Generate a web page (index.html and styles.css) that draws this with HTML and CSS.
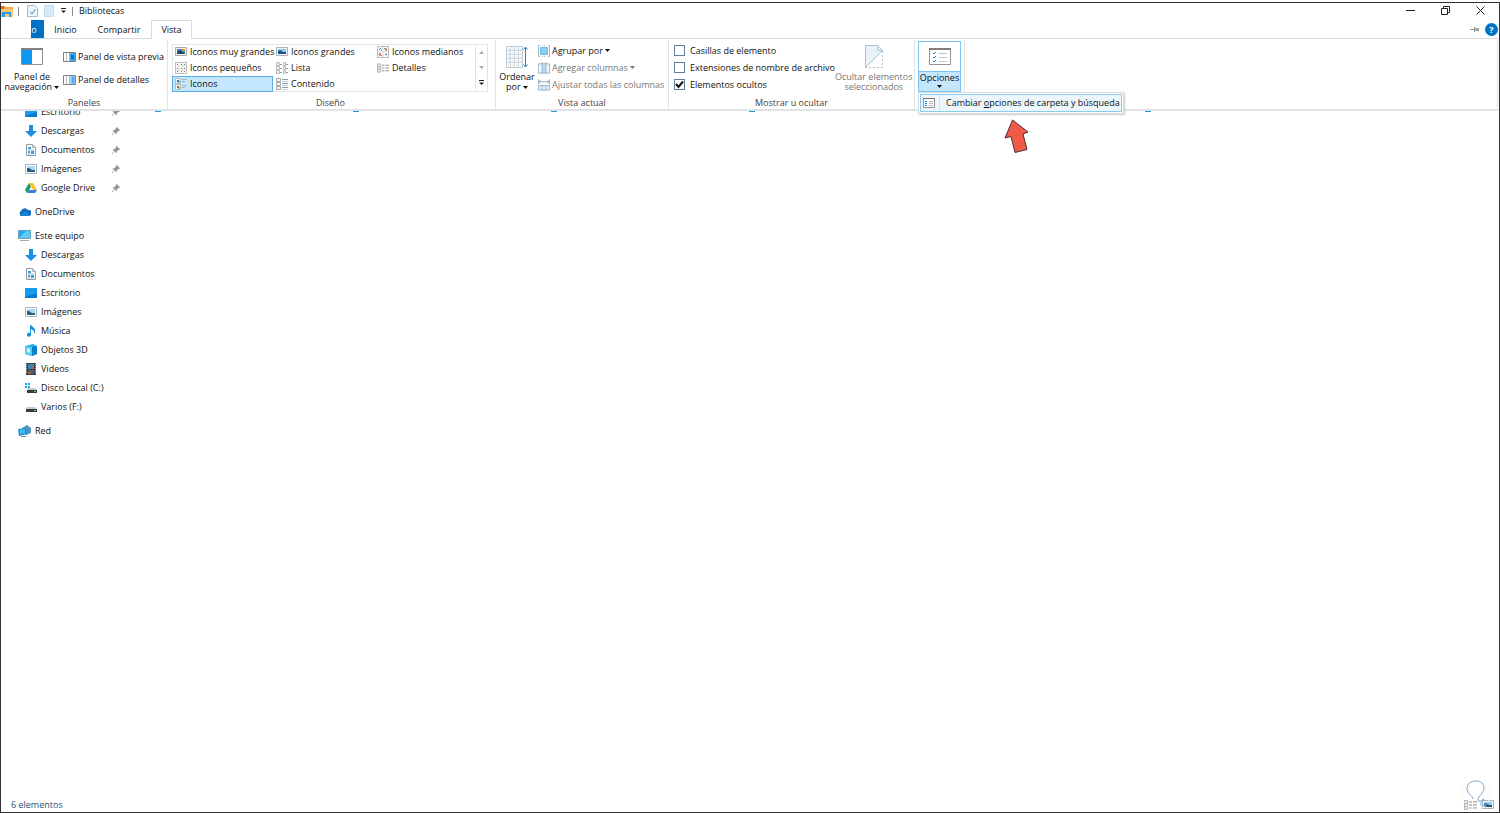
FILE: index.html
```
<!DOCTYPE html>
<html lang="es">
<head>
    <meta charset="UTF-8">
    <title>Bibliotecas</title>
    <link rel="stylesheet" href="styles.css">
</head>
<body>
    <!-- icons -->
    <svg class="sprite" aria-hidden="true">
        <symbol id="folder" viewBox="0 0 12 12">
            <path d="M0 1h4l1 1h7v10H0z" fill="#f5a742"/>
            <path d="M0 4h12v8H0z" fill="#fbc676"/>
            <path d="M0 1h3v3H0z" fill="#d9622b"/>
            <path d="M1 7h9v5H8V9H4v3H1z" fill="#2a9be0"/>
        </symbol>
        <symbol id="doc-check" viewBox="0 0 11 12">
            <path d="M.5.5h7l3 3v8H.5z" fill="#eef6fc" stroke="#9dbcd6"/>
            <path d="M3 6.5l2 2.5 3.5-5" fill="none" stroke="#3b8fd0"/>
        </symbol>
        <symbol id="doc-new" viewBox="0 0 11 12">
            <path d="M.5.5h9v11H.5z" fill="#d5e9f6" stroke="#c3dcec"/>
            <path d="M8 9l3 3M11 9l-3 3" stroke="#e8f2f9"/>
        </symbol>
        <symbol id="more" viewBox="0 0 7 6">
            <path d="M1 .5h5" stroke="#222"/>
            <path d="M1 2.5h5L3.500 5z" fill="#222"/>
        </symbol>
        <symbol id="down" viewBox="0 0 5 3"><path d="M0 0h5L2.500 3z" fill="currentColor"/></symbol>
        <symbol id="up" viewBox="0 0 5 3"><path d="M0 3h5L2.500 0z" fill="currentColor"/></symbol>
        <symbol id="nav-pane" viewBox="0 0 22 17">
            <path d="M.5.5h21v16H.5z" fill="#fff" stroke="#8d8d8d"/>
            <path d="M0 0h22v2H0z" fill="#8a7f7f"/>
            <path d="M1 2h9v14H1z" fill="#0f96f0"/>
            <path d="M10.500 2v14" stroke="#777"/>
        </symbol>
        <symbol id="preview-pane" viewBox="0 0 13 10">
            <path d="M.5.5h12v9H.5z" fill="#fff" stroke="#808080"/>
            <path d="M3.500 1v8M6.500 1v8" stroke="#bbb"/>
            <path d="M7 1h5v8H7z" fill="#3aa5ee"/>
            <path d="M8 3h3v4H8z" fill="#1272bd"/>
        </symbol>
        <symbol id="details-pane" viewBox="0 0 13 10">
            <path d="M.5.5h12v9H.5z" fill="#fff" stroke="#808080"/>
            <path d="M3.500 1v8M6.500 1v8" stroke="#bbb"/>
            <path d="M7 1h5v8H7z" fill="#8cccf5"/>
            <path d="M9 3h2M9 5h2M9 7h2" stroke="#1683d6"/>
        </symbol>
        <symbol id="pic-xl" viewBox="0 0 12 12">
            <path d="M.5 1.500h11v8H.5z" fill="#f4f4f4" stroke="#aaa"/>
            <path d="M2 3h8v5H2z" fill="#2f8fd0"/>
            <path d="M2 8V6l3-2 5 4z" fill="#22415c"/>
            <path d="M7 3h3v2H7z" fill="#e98a36"/>
        </symbol>
        <symbol id="pic-l" viewBox="0 0 12 12">
            <path d="M.5 1.500h11v8H.5z" fill="#f4f8fb" stroke="#aab4bc"/>
            <path d="M2 3h8v5H2z" fill="#8ccaf0"/>
            <path d="M2 8V5l2-1 3 2h3v2z" fill="#1c567f"/>
        </symbol>
        <symbol id="pic-m" viewBox="0 0 12 12">
            <path d="M.5.500h11v11H.5z" fill="#fafafa" stroke="#bbb"/>
            <path d="M6 1v10M1 6h10" stroke="#ddd"/>
            <path d="M2 4l2-2M8 9l2-1" stroke="#0078c8" fill="none"/>
            <path d="M8 3.500h2M2 8.500h2" stroke="#d5512a" stroke-width="2"/>
            <path d="M4 9.500h1M7 2.500h1M4 4.500h1" stroke="#2f9d7a"/>
        </symbol>
        <symbol id="pic-s" viewBox="0 0 12 12">
            <path d="M.5.500h11v11H.5z" fill="#fff" stroke="#bbb"/>
            <path d="M4 1v10M8 1v10M1 4h10M1 8h10" stroke="#ddd"/>
            <path d="M2 2.500h1M6 6.500h1M9 9.500h1" stroke="#c4632f"/>
            <path d="M6 2.500h1M9 6.500h1M2 9.500h1" stroke="#43729c"/>
            <path d="M9 2.500h1M2 6.500h1M6 9.500h1" stroke="#668a58"/>
        </symbol>
        <symbol id="tiles" viewBox="0 0 12 12">
            <path d="M.5.500h5v5h-5zM.5 6.500h5v5h-5z" fill="#f4f8fb" stroke="#b2bdc5"/>
            <path d="M2 3h2" stroke="#0078c8" stroke-width="2"/>
            <path d="M2 9h2" stroke="#c8552a" stroke-width="2"/>
            <path d="M3 4h2M3 10h2" stroke="#32966a"/>
            <path d="M7 1.500h5M7 3.500h3M7 7.500h5M7 9.500h3" stroke="#9cb3c5"/>
        </symbol>
        <symbol id="list" viewBox="0 0 12 12">
            <path d="M.5.500h3v3h-3zM.5 4.500h3v3h-3zM.5 8.500h3v3h-3zM7.500.500h2v3h-2zM7.500 4.500h2v3h-2zM7.500 8.500h2v3h-2z" fill="#f3f3f3" stroke="#bbb"/>
            <path d="M4 2.500h2M4 6.500h2M4 10.500h2M10 2.500h2M10 6.500h2M10 10.500h2" stroke="#999"/>
        </symbol>
        <symbol id="content" viewBox="0 0 12 12">
            <path d="M.5.500h4v3h-4zM.5 4.500h4v3h-4zM.5 8.500h4v3h-4z" fill="#f3f3f3" stroke="#aaa"/>
            <path d="M6 1.500h6M6 5.500h6M6 9.500h6" stroke="#7b9dba"/>
            <path d="M6 3.500h6M6 7.500h6M6 11.500h6" stroke="#c5cfd6"/>
        </symbol>
        <symbol id="details" viewBox="0 0 13 12">
            <path d="M.5 1.500h3v3h-3zM.5 4.500h3v3h-3zM.5 7.500h3v3h-3z" fill="#f3f3f3" stroke="#b0b0b0"/>
            <path d="M5 3h3M9 3h4M5 6h3M9 6h4M5 9h3M9 9h4" stroke="#8b8b8b"/>
        </symbol>
        <symbol id="sort" viewBox="0 0 22 22">
            <path d="M.5.500h16v21H.5z" fill="#fff" stroke="#b9c4cb"/>
            <path d="M0 4.500h17M0 8.500h17M0 12.500h17M0 16.500h17M4.500 0v22M8.500 0v22M12.500 0v22" stroke="#ced6db"/>
            <path d="M2 3h13M2 7h13M2 11h13M2 15h13M2 19h13" stroke="#cfe3f1" stroke-dasharray="2 2"/>
            <path d="M19.500 2v18M17.500 3.500l2-2.500 2 2.500M17.500 18.500l2 2.500 2-2.500" fill="none" stroke="#1c84cf"/>
        </symbol>
        <symbol id="group" viewBox="0 0 12 12">
            <path d="M2 .5H.5v11H2M10 .5h1.500v11H10" fill="none" stroke="#a5b6c3"/>
            <path d="M2.500 2.500h7v7h-7z" fill="#8ccff6" stroke="#6db8e6"/>
            <path d="M4 .5h4M4 11.500h4" stroke="#b6c4ce" stroke-dasharray="1 1"/>
        </symbol>
        <symbol id="add-col" viewBox="0 0 13 12">
            <path d="M.5 1.500h12v10H.5z" fill="#f3f8fc" stroke="#95b0c5"/>
            <path d="M4.500 0v12M8.500 0v12" stroke="#7199b9"/>
            <path d="M5 3h3v8H5z" fill="#b6d9ef"/>
        </symbol>
        <symbol id="fit-col" viewBox="0 0 13 12">
            <path d="M1 2.500h11M3 .5l-2 2 2 2M10 .5l2 2-2 2M.5 0v5M12.500 0v5" fill="none" stroke="#95a9b8"/>
            <path d="M.5 6.500h12v5H.5zM4.500 6v6M8.500 6v6" fill="#e5f1f9" stroke="#95b0c5"/>
        </symbol>
        <symbol id="hide-doc" viewBox="0 0 18 23">
            <path d="M.5 22.500V.5h12l5 5z" fill="#e8f3f9"/>
            <path d="M.5 22.500V.5h12l5 5L.5 22.500M12.500.5v5h5" fill="none" stroke="#a9c6d8"/>
            <path d="M17.500 6v16.500H1" fill="none" stroke="#b3c0c8" stroke-dasharray="2 2"/>
        </symbol>
        <symbol id="options" viewBox="0 0 22 17">
            <path d="M.5.5h21v16H.5z" fill="#fff" stroke="#949494"/>
            <path d="M0 0h22v2H0z" fill="#8a7b7b"/>
            <path d="M4 5l1 1 2-2M4 9l1 1 2-2M4 13l1 1 2-2" fill="none" stroke="#1789dc"/>
            <path d="M10 5.500h8M10 9.500h8M10 13.500h8" stroke="#c2c2c2"/>
        </symbol>
        <symbol id="options-small" viewBox="0 0 12 10">
            <path d="M.5.5h11v9H.5z" fill="#fff" stroke="#949494"/>
            <path d="M0 .5h12" stroke="#7d6d6d"/>
            <path d="M2 3.500h2M2 5.500h2M2 7.500h2" stroke="#1789dc"/>
            <path d="M6 3.500h4M6 5.500h4M6 7.500h4" stroke="#bbb"/>
        </symbol>
        <symbol id="desktop" viewBox="0 0 12 10"><path d="M0 0h12v10H0z" fill="#0b78cf"/><path d="M0 0h12v5L0 9z" fill="#159bef"/></symbol>
        <symbol id="download" viewBox="0 0 12 12"><path d="M4 0h4v6h4l-6 6-6-6h4z" fill="#1b8fe4"/></symbol>
        <symbol id="document" viewBox="0 0 12 12">
            <path d="M1.500.500h6l3 3v8h-9z" fill="#fff" stroke="#929ba1"/>
            <path d="M7.500.500v3h3" fill="none" stroke="#a7b0b6"/>
            <path d="M3 3h3v2H3zM3 7h2v2H3zM6 7h3v3H6z" fill="#3b9ed8"/>
            <path d="M3 6h6M3 10h3" stroke="#91b8cf"/>
        </symbol>
        <symbol id="picture" viewBox="0 0 12 10">
            <path d="M.5.500h11v9H.5z" fill="#fff" stroke="#aab4bc"/>
            <path d="M2 2h8v6H2z" fill="#a9daf5"/>
            <path d="M2 7V4l2 0 3 2h3v2H2z" fill="#28607f"/>
        </symbol>
        <symbol id="gdrive" viewBox="0 0 12 12">
            <path d="M4 1h4l4 7H8z" fill="#f9c22b"/>
            <path d="M4 1l2 4-4 6-2-3z" fill="#169b5b"/>
            <path d="M4 8h8l-2 3H2z" fill="#347fe0"/>
            <path d="M6 5l2 3H4z" fill="#fff"/>
        </symbol>
        <symbol id="cloud" viewBox="0 0 13 9"><path d="M3 9a3 3 0 0 1 0-5 4 4 0 0 1 7-1 3 3 0 0 1 1 6z" fill="#0f6dbf"/><path d="M2 8l6-4 4 4-1 1H3z" fill="#1783d6"/></symbol>
        <symbol id="pc" viewBox="0 0 13 12">
            <path d="M.5.500h12v8H.5z" fill="#24aaf3" stroke="#6b9cb9"/>
            <path d="M1 8l7-7h4v7z" fill="#5dcbfa"/>
            <path d="M2 10.500h9" stroke="#9aabb6"/>
        </symbol>
        <symbol id="music" viewBox="0 0 12 12"><path d="M5 0h1l4 4v4H9V6L6 4v6a2 2 0 1 1-1-2z" fill="#168fe2"/></symbol>
        <symbol id="cube" viewBox="0 0 12 12">
            <path d="M0 2l8-2 4 2v8l-5 2-7-2z" fill="#20aeea"/>
            <path d="M0 2l7 1v9l-7-2z" fill="#57cdf5"/>
            <path d="M7 3l5-1v8l-5 2z" fill="#087fc6"/>
            <path d="M2 4l3 1v4L2 8z" fill="#d7f3fc"/>
        </symbol>
        <symbol id="video" viewBox="0 0 12 12">
            <path d="M1 0h10v12H1z" fill="#3e4145"/>
            <path d="M3 1h6v5H3z" fill="#3b85b4"/>
            <path d="M3 7h6v4H3z" fill="#465f82"/>
            <path d="M6 4h3v2H6zM3 9h3v2H3z" fill="#b8593d"/>
            <path d="M1.500 1v10M10.500 1v10" stroke="#bbb" stroke-dasharray="1 1"/>
        </symbol>
        <symbol id="disk" viewBox="0 0 12 12">
            <path d="M2 6h8l2 3H1z" fill="#c8c8c8"/>
            <path d="M1 8h11v3H1z" fill="#383c40"/>
            <path d="M9 9.500h2" stroke="#54d978"/>
        </symbol>
        <symbol id="windisk" viewBox="0 0 12 12">
            <path d="M0 1h2v2H0zM3 1h2v2H3zM0 4h2v2H0zM3 4h2v2H3z" fill="#16a2e6"/>
            <path d="M3 6h7l2 3H2z" fill="#c8c8c8"/>
            <path d="M2 8h10v3H2z" fill="#383c40"/>
            <path d="M9 9.500h2" stroke="#54d978"/>
        </symbol>
        <symbol id="network" viewBox="0 0 13 12">
            <path d="M4 3l5-3 4 3v5l-5 2z" fill="#5794bc"/>
            <path d="M0 4l8-1 1 6-8 2z" fill="#138fdb"/>
            <path d="M1 5l6-1v4L2 9z" fill="#45baf2"/>
            <path d="M3 11.500h5" stroke="#5f91ad"/>
        </symbol>
        <symbol id="pin" viewBox="0 0 10 10">
            <path d="M6 0l4 4-1 1H8L6 7v2L5 8.500 3 6.500 1 5V4h2l2-2V1z" fill="#8b969f"/>
            <path d="M3 6.500L0 10" stroke="#8b969f"/>
        </symbol>
    </svg>

    <div class="window">
        <header class="title-bar">
            <svg class="app-icon" width="12" height="12"><use href="#folder"/></svg>
            <span class="bar"></span>
            <button class="quick" aria-label="Propiedades"><svg width="11" height="12"><use href="#doc-check"/></svg></button>
            <button class="quick" aria-label="Nueva carpeta"><svg width="11" height="12"><use href="#doc-new"/></svg></button>
            <button class="quick quick-more" aria-label="Personalizar"><svg width="7" height="6"><use href="#more"/></svg></button>
            <span class="bar"></span>
            <h1 class="title">Bibliotecas</h1>
            <div class="controls">
                <button aria-label="Minimizar"><svg width="9" height="9"><path d="M0 4.500h9" stroke="#222"/></svg></button>
                <button aria-label="Restaurar"><svg width="9" height="9"><path d="M.5 2.500h6v6h-6zM2.500 2V.5h6v6H7" fill="none" stroke="#222"/></svg></button>
                <button aria-label="Cerrar"><svg width="9" height="9"><path d="M.5.500l8 8M8.500.500l-8 8" stroke="#222"/></svg></button>
            </div>
        </header>

        <nav class="tabs">
            <button class="tab tab-file" aria-label="Archivo">o</button>
            <button class="tab tab-home">Inicio</button>
            <button class="tab tab-share">Compartir</button>
            <button class="tab tab-view active">Vista</button>
            <div class="tab-tools">
                <button aria-label="Anclar la cinta"><svg width="9" height="7"><path d="M0 3.500h4M8.500 2v3M4.500 1v5" stroke="#999" fill="none"/><path d="M5 2h3v3H5z" fill="#aaa"/></svg></button>
                <button class="help" aria-label="Ayuda">?</button>
            </div>
        </nav>

        <section class="ribbon">
            <div class="group group-panes">
                <div class="group-body">
                    <button class="big big-nav">
                        <svg width="22" height="17"><use href="#nav-pane"/></svg>
                        <span>Panel de<br>navegación <svg width="5" height="3"><use href="#down"/></svg></span>
                    </button>
                    <div class="stack stack-panes">
                        <button class="cmd"><svg width="13" height="10"><use href="#preview-pane"/></svg>Panel de vista previa</button>
                        <button class="cmd"><svg width="13" height="10"><use href="#details-pane"/></svg>Panel de detalles</button>
                    </div>
                </div>
                <div class="group-name">Paneles</div>
            </div>

            <div class="group group-layout">
                <div class="gallery">
                    <div class="views">
                        <button class="view"><svg width="12" height="12"><use href="#pic-xl"/></svg>Iconos muy grandes</button>
                        <button class="view"><svg width="12" height="12"><use href="#pic-l"/></svg>Iconos grandes</button>
                        <button class="view"><svg width="12" height="12"><use href="#pic-m"/></svg>Iconos medianos</button>
                        <button class="view"><svg width="12" height="12"><use href="#pic-s"/></svg>Iconos pequeños</button>
                        <button class="view"><svg width="12" height="12"><use href="#list"/></svg>Lista</button>
                        <button class="view"><svg width="12" height="12"><use href="#details"/></svg>Detalles</button>
                        <button class="view selected"><svg width="12" height="12"><use href="#tiles"/></svg>Iconos</button>
                        <button class="view"><svg width="12" height="12"><use href="#content"/></svg>Contenido</button>
                    </div>
                    <div class="gallery-scroll">
                        <button class="dim" aria-label="Subir"><svg width="5" height="3"><use href="#up"/></svg></button>
                        <button class="dim" aria-label="Bajar"><svg width="5" height="3"><use href="#down"/></svg></button>
                        <button aria-label="Más"><svg width="7" height="6"><use href="#more"/></svg></button>
                    </div>
                </div>
                <div class="group-name">Diseño</div>
            </div>

            <div class="group group-current">
                <div class="group-body">
                    <button class="big big-sort">
                        <svg width="22" height="22"><use href="#sort"/></svg>
                        <span>Ordenar<br>por <svg width="5" height="3"><use href="#down"/></svg></span>
                    </button>
                    <div class="stack">
                        <button class="cmd"><svg width="12" height="12"><use href="#group"/></svg>Agrupar por <svg width="5" height="3"><use href="#down"/></svg></button>
                        <button class="cmd" disabled><svg width="12" height="12"><use href="#add-col"/></svg>Agregar columnas <svg width="5" height="3"><use href="#down"/></svg></button>
                        <button class="cmd" disabled><svg width="12" height="12"><use href="#fit-col"/></svg>Ajustar todas las columnas</button>
                    </div>
                </div>
                <div class="group-name">Vista actual</div>
            </div>

            <div class="group group-show">
                <div class="group-body">
                    <div class="stack">
                        <label class="check"><input type="checkbox">Casillas de elemento</label>
                        <label class="check"><input type="checkbox">Extensiones de nombre de archivo</label>
                        <label class="check"><input type="checkbox" checked>Elementos ocultos</label>
                    </div>
                    <button class="big big-hide" disabled>
                        <svg width="18" height="23"><use href="#hide-doc"/></svg>
                        <span>Ocultar elementos<br>seleccionados</span>
                    </button>
                </div>
                <div class="group-name">Mostrar u ocultar</div>
            </div>

            <div class="group group-options">
                <button class="options">
                    <span class="options-icon"><svg width="22" height="17"><use href="#options"/></svg></span>
                    <span class="options-text">Opciones<svg width="5" height="3"><use href="#down"/></svg></span>
                </button>
                <div class="menu">
                    <button class="menu-item">
                        <svg width="12" height="10"><use href="#options-small"/></svg>
                        <span>Cambiar <u>o</u>pciones de carpeta y búsqueda</span>
                    </button>
                    <svg class="pointer" width="26" height="35">
                        <path d="M9.500 1L25 13l-5 2 4 15.500-12 3L8 17.500 2 19z" fill="#ee5a46" stroke="#4d3030"/>
                    </svg>
                </div>
            </div>
        </section>

        <main class="main">
            <nav class="tree">
                <ul>
                    <li class="child"><svg width="12" height="10"><use href="#desktop"/></svg><a href="#">Escritorio</a><svg class="pin" width="8" height="8"><use href="#pin"/></svg></li>
                    <li class="child"><svg width="12" height="12"><use href="#download"/></svg><a href="#">Descargas</a><svg class="pin" width="8" height="8"><use href="#pin"/></svg></li>
                    <li class="child"><svg width="12" height="12"><use href="#document"/></svg><a href="#">Documentos</a><svg class="pin" width="8" height="8"><use href="#pin"/></svg></li>
                    <li class="child"><svg width="12" height="10"><use href="#picture"/></svg><a href="#">Imágenes</a><svg class="pin" width="8" height="8"><use href="#pin"/></svg></li>
                    <li class="child"><svg width="12" height="12"><use href="#gdrive"/></svg><a href="#">Google Drive</a><svg class="pin" width="8" height="8"><use href="#pin"/></svg></li>
                </ul>
                <ul>
                    <li><svg width="13" height="9"><use href="#cloud"/></svg><a href="#">OneDrive</a></li>
                </ul>
                <ul>
                    <li><svg width="13" height="12"><use href="#pc"/></svg><a href="#">Este equipo</a></li>
                    <li class="child"><svg width="12" height="12"><use href="#download"/></svg><a href="#">Descargas</a></li>
                    <li class="child"><svg width="12" height="12"><use href="#document"/></svg><a href="#">Documentos</a></li>
                    <li class="child"><svg width="12" height="10"><use href="#desktop"/></svg><a href="#">Escritorio</a></li>
                    <li class="child"><svg width="12" height="10"><use href="#picture"/></svg><a href="#">Imágenes</a></li>
                    <li class="child"><svg width="12" height="12"><use href="#music"/></svg><a href="#">Música</a></li>
                    <li class="child"><svg width="12" height="12"><use href="#cube"/></svg><a href="#">Objetos 3D</a></li>
                    <li class="child"><svg width="12" height="12"><use href="#video"/></svg><a href="#">Videos</a></li>
                    <li class="child"><svg width="12" height="12"><use href="#windisk"/></svg><a href="#">Disco Local (C:)</a></li>
                    <li class="child"><svg width="12" height="12"><use href="#disk"/></svg><a href="#">Varios (F:)</a></li>
                </ul>
                <ul>
                    <li><svg width="13" height="12"><use href="#network"/></svg><a href="#">Red</a></li>
                </ul>
            </nav>
            <!-- only the lower edge of each library icon shows under the ribbon -->
            <div class="files">
                <span class="file"></span>
                <span class="file"></span>
                <span class="file"></span>
                <span class="file"></span>
                <span class="file"></span>
                <span class="file"></span>
            </div>
        </main>

        <footer class="status">
            <span>6 elementos</span>
            <div class="status-views">
                <button aria-label="Detalles"><svg width="13" height="12"><use href="#details"/></svg></button>
                <button aria-label="Iconos grandes"><svg width="12" height="12"><use href="#pic-l"/></svg></button>
                <svg class="bulb" width="30" height="32">
                    <circle cx="15" cy="16" r="14" fill="none" stroke="#eee" stroke-dasharray="3 2"/>
                    <path d="M12 20c0-3-6-5-6-10 0-5 4-8 9-8s8 3 8 7c0 5-6 8-6 12 0 3 4 0 6-1-2 3-5 5-3 6 1 1 4-1 5 2" fill="none" stroke="#78a8d0"/>
                </svg>
            </div>
        </footer>
    </div>
</body>
</html>
```
FILE: styles.css
```
* {
    margin: 0;
    padding: 0;
    box-sizing: border-box;
}
body {
    padding-top: 2px;
    font-family: "Open Sans", "Noto Sans", sans-serif;
    font-size: 9px;
    line-height: 10px;
    color: #111;
    background: #fff;
}
button {
    border: 0;
    background: none;
    font: inherit;
    color: inherit;
    white-space: nowrap;
}
a {
    color: inherit;
    text-decoration: none;
}
svg {
    flex: none;
}
.sprite {
    display: none;
}
.window {
    display: flex;
    flex-direction: column;
    height: calc(100vh - 2px);
    border: 1px solid #333;
}

/* title bar */
.title-bar {
    display: flex;
    align-items: center;
    height: 17px;
    padding-bottom: 1px;
}
.bar {
    width: 1px;
    height: 9px;
    background: #888;
}
.app-icon {
    margin-right: 5px;
}
.quick {
    display: flex;
    margin-left: 6px;
}
.quick-more {
    margin: 0 5px;
}
.bar + .quick {
    margin-left: 8px;
}
.title {
    margin-left: 6px;
    font-size: 9px;
    font-weight: normal;
}
.controls {
    display: flex;
    margin-left: auto;
    padding-right: 1px;
}
.controls button {
    display: flex;
    width: 35px;
    justify-content: center;
    padding-bottom: 2px;
}

/* tabs */
.tabs {
    display: flex;
    height: 18px;
    padding-left: 30px;
}
.tab {
    height: 18px;
    padding-top: 1px;
}
.tab-file {
    width: 13px;
    padding-right: 7px;
    color: #fff;
    background: #0071c5;
}
.tab-home {
    width: 43px;
}
.tab-share {
    width: 64px;
}
.tab-view {
    width: 41px;
}
.tab.active {
    height: 19px;
    border: 1px solid #dadbdc;
    border-bottom: 0;
    padding: 0;
    background: #fff;
    position: relative;
    z-index: 1;
}
.tab-tools {
    display: flex;
    align-items: center;
    gap: 6px;
    margin-left: auto;
    padding-right: 1px;
}
.tab-tools button {
    display: flex;
}
.tab-tools .help {
    justify-content: center;
    width: 13px;
    line-height: 13px;
    border-radius: 50%;
    font-weight: bold;
    color: #fff;
    background: #0071c5;
}

/* ribbon */
.ribbon {
    display: flex;
    height: 73px;
    margin-right: 1px;
    padding-top: 1px;
    border-top: 1px solid #dadbdc;
    border-right: 1px solid #e2e3e4;
    border-bottom: 2px solid #e2e3e4;
}
.group {
    display: flex;
    flex-direction: column;
    flex: none;
    border-right: 1px solid #e2e3e4;
}
.group-body {
    display: flex;
    height: 56px;
}
.group-name {
    margin-top: auto;
    padding-bottom: 1px;
    text-align: center;
    color: #444;
}
.group-panes {
    width: 167px;
}
.group-layout {
    width: 328px;
    padding-left: 4px;
}
.group-layout .group-name {
    padding-right: 6px;
}
.group-current {
    width: 173px;
}
.group-show {
    width: 246px;
}
.group-options {
    position: relative;
    width: 50px;
    padding-left: 3px;
}
.big {
    display: flex;
    flex-direction: column;
    align-items: center;
    justify-content: flex-end;
    padding-bottom: 4px;
    text-align: center;
}
.big > svg {
    margin-bottom: 7px;
}
.big span svg {
    vertical-align: 1px;
}
.big-nav {
    width: 62px;
}
.big-sort {
    width: 42px;
}
.big-sort > svg, .big-hide > svg {
    margin-bottom: 4px;
}
.stack {
    display: flex;
    flex-direction: column;
    padding-top: 2px;
}
.stack-panes {
    padding-top: 5px;
}
.cmd {
    display: flex;
    align-items: center;
    gap: 2px;
    height: 17px;
}
.stack-panes .cmd {
    height: 23px;
}
.cmd:disabled, .big:disabled {
    color: #777;
}
.check {
    display: flex;
    align-items: center;
    gap: 5px;
    height: 17px;
    padding-left: 5px;
    white-space: nowrap;
}
.check input {
    appearance: none;
    width: 11px;
    height: 11px;
    border: 1px solid #5f7f9e;
    background: #fff;
}
.check input:checked {
    background: #fff url("data:image/svg+xml,%3Csvg xmlns='http://www.w3.org/2000/svg' viewBox='0 0 9 9'%3E%3Cpath d='M1 4l2.500 3L8 1.500' fill='none' stroke='%23111' stroke-width='2'/%3E%3C/svg%3E");
}

/* gallery of views */
.gallery {
    display: flex;
    width: 316px;
    height: 48px;
    margin-top: 4px;
    border: 1px solid #e2e3e4;
}
.views {
    display: grid;
    grid-template-columns: repeat(3, 101px);
    grid-auto-rows: 16px;
    flex: 1;
    margin: -1px;
}
.view {
    display: flex;
    align-items: center;
    gap: 3px;
    padding-left: 2px;
    border: 1px solid transparent;
}
.view.selected {
    border-color: #5aaee8;
    background: #c5e7fd;
}
.gallery-scroll {
    display: flex;
    flex-direction: column;
    width: 12px;
    border-left: 1px solid #e2e3e4;
}
.gallery-scroll button {
    display: flex;
    flex: 1;
    align-items: center;
    justify-content: center;
}
.gallery-scroll .dim {
    color: #aaa;
}

/* options button and its menu */
.options {
    width: 43px;
    margin-top: 1px;
    border: 1px solid #7fc4f0;
}
.options-icon {
    display: flex;
    justify-content: center;
    padding: 6px 0;
}
.options-text {
    display: flex;
    flex-direction: column;
    align-items: center;
    gap: 2px;
    height: 20px;
    padding-top: 1px;
    border-top: 1px solid #7fc4f0;
    background: #c5e7fd;
}
.menu {
    position: absolute;
    top: 52px;
    left: 3px;
    z-index: 2;
    padding: 1px;
    border: 1px solid #d5d8da;
    background: #fff;
    box-shadow: 1px 1px 2px #ccc;
}
.menu-item {
    display: flex;
    align-items: center;
    height: 18px;
    padding: 0 1px 0 2px;
    border: 1px solid #8accf0;
    background: #ebf6fd;
}
.menu-item span {
    margin-left: 4px;
    padding-left: 6px;
    border-left: 1px solid #cfe4f0;
    line-height: 16px;
}
.pointer {
    position: absolute;
    top: 26px;
    left: 84px;
}

/* content */
.main {
    display: flex;
    flex: 1;
    overflow: hidden;
}
.tree {
    display: flex;
    flex-direction: column;
    gap: 5px;
    width: 154px;
    margin-top: -9px;
}
.tree ul {
    list-style: none;
}
.tree li {
    display: flex;
    align-items: center;
    gap: 4px;
    height: 19px;
    padding-left: 17px;
}
.tree .child {
    padding-left: 24px;
}
.tree a {
    flex: 1;
}
.pin {
    margin-right: 35px;
}
.files {
    display: grid;
    grid-template-columns: repeat(6, 198px);
    flex: 1;
}
.file {
    width: 6px;
    height: 1px;
    background: #1b9be6;
}

/* status bar */
.status {
    display: flex;
    align-items: center;
    justify-content: space-between;
    height: 14px;
    padding: 0 5px 0 10px;
    color: #1e4f78;
}
.status-views {
    display: flex;
    gap: 5px;
    position: relative;
}
.status-views button {
    display: flex;
}
.bulb {
    position: absolute;
    right: 3px;
    bottom: 0;
}
```
